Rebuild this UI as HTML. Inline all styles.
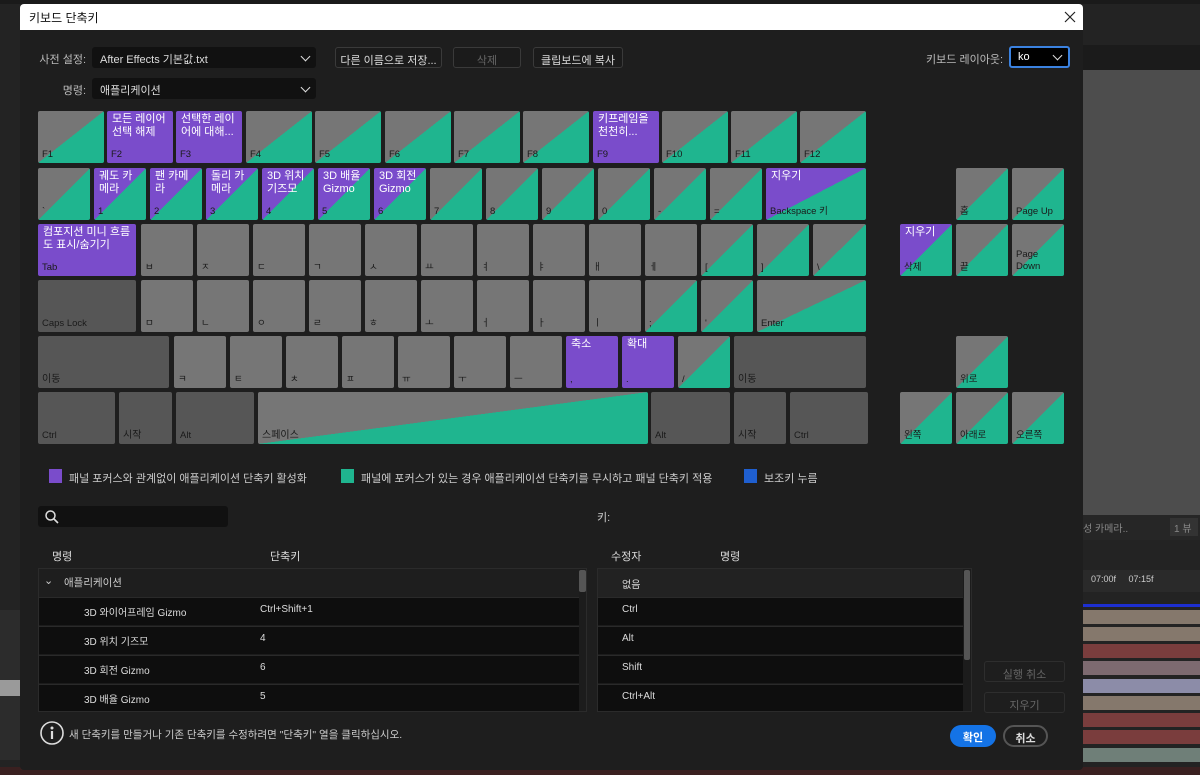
<!DOCTYPE html>
<html><head><meta charset="utf-8">
<style>
*{box-sizing:border-box;margin:0;padding:0}
body{width:1200px;height:775px;overflow:hidden;background:#232323;position:relative;font-family:"Liberation Sans","Noto Sans CJK KR",sans-serif;color:#cfcfcf;font-size:11px}
.a{position:absolute}
.dlg{left:20px;top:4px;width:1063px;height:766px;background:#1e1e1e;border-radius:4px;overflow:hidden}
.title{left:0;top:0;width:1063px;height:26px;background:#fff;color:#111;font-size:12px;padding:5px 0 0 9px}
.k{position:absolute;border-radius:2px;font-size:9.5px;color:#1a1a1a;overflow:hidden}
.k .l{position:absolute;left:4px;bottom:3px;white-space:nowrap}
.k .t{position:absolute;left:5px;top:2px;color:#fff;font-size:11px;line-height:13px}
.gr{background:#767676}
.d{background:#565656}
.g{background:linear-gradient(to bottom right,#767676 50%,#1fb58f 50%)}
.p{background:#7a4ccb}
.pg{background:linear-gradient(to bottom right,#7a4ccb 50%,#1fb58f 50%)}
.d .l{color:#1a1a1a}
.dd{background:#111;border-radius:3px;height:21px;color:#ddd;padding:4px 0 0 8px;font-size:11px}
.chev{position:absolute;right:7px;top:6px;width:7px;height:7px;border-right:1.6px solid #ddd;border-bottom:1.6px solid #ddd;transform:rotate(45deg)}
.btn{background:#1b1b1b;border:1px solid #3a3a3a;border-radius:3px;height:21px;text-align:center;padding-top:4px;font-size:11px;color:#ddd}
.row{position:absolute;left:0;width:540px;height:28px;background:#0e0e0e;border-top:1px solid #2a2a2a;font-size:10px;color:#ddd}
</style></head><body>
<div class="a" style="left:0;top:0;width:1200px;height:4px;background:#1a1a1a"></div>
<div class="a" style="left:1083px;top:45px;width:117px;height:25px;background:#1b1b1b"></div>
<div class="a" style="left:1083px;top:70px;width:117px;height:445px;background:#4d4d4d"></div>
<div class="a" style="left:1083px;top:515px;width:117px;height:25px;background:#262626"></div>
<div class="a" style="left:1170px;top:518px;width:28px;height:18px;background:#333;color:#888;font-size:10px;padding:2px 4px">1 뷰</div>
<div class="a" style="left:1083px;top:520px;width:75px;color:#888;font-size:10px">성 카메라..</div>
<div class="a" style="left:1083px;top:570px;width:117px;height:22px;background:#2a2a2a;color:#ccc;font-size:9px;padding:4px 8px">07:00f &nbsp; &nbsp; 07:15f</div>
<div class="a" style="left:1083px;top:604px;width:117px;height:3px;background:#1d2fd0"></div>
<div class="a" style="left:1083px;top:610px;width:117px;height:14px;background:#85786c"></div>
<div class="a" style="left:1083px;top:627px;width:117px;height:14px;background:#85786c"></div>
<div class="a" style="left:1083px;top:644px;width:117px;height:14px;background:#7a3d3d"></div>
<div class="a" style="left:1083px;top:661px;width:117px;height:14px;background:#7d6a70"></div>
<div class="a" style="left:1083px;top:679px;width:117px;height:14px;background:#8c8ca8"></div>
<div class="a" style="left:1083px;top:696px;width:117px;height:14px;background:#85786c"></div>
<div class="a" style="left:1083px;top:713px;width:117px;height:14px;background:#7a3d3d"></div>
<div class="a" style="left:1083px;top:730px;width:117px;height:14px;background:#7a3d3d"></div>
<div class="a" style="left:1083px;top:748px;width:117px;height:14px;background:#6f7f78"></div>
<div class="a" style="left:0;top:767px;width:1200px;height:8px;background:#3a2020"></div>
<div class="a" style="left:0;top:610px;width:20px;height:150px;background:#2c2c2c"></div>
<div class="a" style="left:0;top:680px;width:20px;height:16px;background:#9a9a9a"></div>

<div class="a dlg">
<div class="a title">키보드 단축키</div>
<svg class="a" style="left:1044px;top:7px" width="12" height="12"><path d="M1 1L11 11M11 1L1 11" stroke="#222" stroke-width="1.2"/></svg>
</div>

<div class="a" style="left:38px;top:51px;width:48px;text-align:right;color:#bbb">사전 설정:</div>
<div class="a dd" style="left:92px;top:47px;width:224px">After Effects 기본값.txt<span class="chev"></span></div>
<div class="a" style="left:38px;top:82px;width:48px;text-align:right;color:#bbb">명령:</div>
<div class="a dd" style="left:92px;top:78px;width:224px">애플리케이션<span class="chev"></span></div>
<div class="a btn" style="left:335px;top:47px;width:107px">다른 이름으로 저장...</div>
<div class="a btn" style="left:453px;top:47px;width:68px;color:#666">삭제</div>
<div class="a btn" style="left:533px;top:47px;width:90px">클립보드에 복사</div>
<div class="a" style="left:900px;top:51px;width:103px;text-align:right;color:#bbb">키보드 레이아웃:</div>
<div class="a dd" style="left:1009px;top:46px;width:61px;height:22px;background:#000;border:2px solid #3b82e0;padding:3px 0 0 7px;color:#fff">ko<span class="chev" style="top:4px"></span></div>

<div class="k g" style="left:38px;top:111px;width:66px;height:52px"><span class="l">F1</span></div>
<div class="k p" style="left:107px;top:111px;width:66px;height:52px"><span class="t">모든 레이어<br>선택 해제</span><span class="l">F2</span></div>
<div class="k p" style="left:176px;top:111px;width:66px;height:52px"><span class="t">선택한 레이<br>어에 대해...</span><span class="l">F3</span></div>
<div class="k g" style="left:246px;top:111px;width:66px;height:52px"><span class="l">F4</span></div>
<div class="k g" style="left:315px;top:111px;width:66px;height:52px"><span class="l">F5</span></div>
<div class="k g" style="left:385px;top:111px;width:66px;height:52px"><span class="l">F6</span></div>
<div class="k g" style="left:454px;top:111px;width:66px;height:52px"><span class="l">F7</span></div>
<div class="k g" style="left:523px;top:111px;width:66px;height:52px"><span class="l">F8</span></div>
<div class="k p" style="left:593px;top:111px;width:66px;height:52px"><span class="t">키프레임을<br>천천히...</span><span class="l">F9</span></div>
<div class="k g" style="left:662px;top:111px;width:66px;height:52px"><span class="l">F10</span></div>
<div class="k g" style="left:731px;top:111px;width:66px;height:52px"><span class="l">F11</span></div>
<div class="k g" style="left:800px;top:111px;width:66px;height:52px"><span class="l">F12</span></div>

<div class="k g" style="left:38px;top:168px;width:52px;height:52px"><span class="l">`</span></div>
<div class="k pg" style="left:94px;top:168px;width:52px;height:52px"><span class="t">궤도 카<br>메라</span><span class="l">1</span></div>
<div class="k pg" style="left:150px;top:168px;width:52px;height:52px"><span class="t">팬 카메<br>라</span><span class="l">2</span></div>
<div class="k pg" style="left:206px;top:168px;width:52px;height:52px"><span class="t">돌리 카<br>메라</span><span class="l">3</span></div>
<div class="k pg" style="left:262px;top:168px;width:52px;height:52px"><span class="t">3D 위치<br>기즈모</span><span class="l">4</span></div>
<div class="k pg" style="left:318px;top:168px;width:52px;height:52px"><span class="t">3D 배율<br>Gizmo</span><span class="l">5</span></div>
<div class="k pg" style="left:374px;top:168px;width:52px;height:52px"><span class="t">3D 회전<br>Gizmo</span><span class="l">6</span></div>
<div class="k g" style="left:430px;top:168px;width:52px;height:52px"><span class="l">7</span></div>
<div class="k g" style="left:486px;top:168px;width:52px;height:52px"><span class="l">8</span></div>
<div class="k g" style="left:542px;top:168px;width:52px;height:52px"><span class="l">9</span></div>
<div class="k g" style="left:598px;top:168px;width:52px;height:52px"><span class="l">0</span></div>
<div class="k g" style="left:654px;top:168px;width:52px;height:52px"><span class="l">-</span></div>
<div class="k g" style="left:710px;top:168px;width:52px;height:52px"><span class="l">=</span></div>
<div class="k pg" style="left:766px;top:168px;width:100px;height:52px"><span class="t">지우기</span><span class="l">Backspace 키</span></div>
<div class="k g" style="left:956px;top:168px;width:52px;height:52px"><span class="l">홈</span></div>
<div class="k g" style="left:1012px;top:168px;width:52px;height:52px"><span class="l">Page Up</span></div>

<div class="k p" style="left:38px;top:224px;width:98px;height:52px"><span class="t">컴포지션 미니 흐름<br>도 표시/숨기기</span><span class="l">Tab</span></div>
<div class="k gr" style="left:141px;top:224px;width:52px;height:52px"><span class="l">ㅂ</span></div>
<div class="k gr" style="left:197px;top:224px;width:52px;height:52px"><span class="l">ㅈ</span></div>
<div class="k gr" style="left:253px;top:224px;width:52px;height:52px"><span class="l">ㄷ</span></div>
<div class="k gr" style="left:309px;top:224px;width:52px;height:52px"><span class="l">ㄱ</span></div>
<div class="k gr" style="left:365px;top:224px;width:52px;height:52px"><span class="l">ㅅ</span></div>
<div class="k gr" style="left:421px;top:224px;width:52px;height:52px"><span class="l">ㅛ</span></div>
<div class="k gr" style="left:477px;top:224px;width:52px;height:52px"><span class="l">ㅕ</span></div>
<div class="k gr" style="left:533px;top:224px;width:52px;height:52px"><span class="l">ㅑ</span></div>
<div class="k gr" style="left:589px;top:224px;width:52px;height:52px"><span class="l">ㅐ</span></div>
<div class="k gr" style="left:645px;top:224px;width:52px;height:52px"><span class="l">ㅔ</span></div>
<div class="k g" style="left:701px;top:224px;width:52px;height:52px"><span class="l">[</span></div>
<div class="k g" style="left:757px;top:224px;width:52px;height:52px"><span class="l">]</span></div>
<div class="k g" style="left:813px;top:224px;width:53px;height:52px"><span class="l">\</span></div>
<div class="k pg" style="left:900px;top:224px;width:52px;height:52px"><span class="t">지우기</span><span class="l">삭제</span></div>
<div class="k g" style="left:956px;top:224px;width:52px;height:52px"><span class="l">끝</span></div>
<div class="k g" style="left:1012px;top:224px;width:52px;height:52px"><span class="l" style="line-height:12px">Page<br>Down</span></div>

<div class="k d" style="left:38px;top:280px;width:98px;height:52px"><span class="l">Caps Lock</span></div>
<div class="k gr" style="left:141px;top:280px;width:52px;height:52px"><span class="l">ㅁ</span></div>
<div class="k gr" style="left:197px;top:280px;width:52px;height:52px"><span class="l">ㄴ</span></div>
<div class="k gr" style="left:253px;top:280px;width:52px;height:52px"><span class="l">ㅇ</span></div>
<div class="k gr" style="left:309px;top:280px;width:52px;height:52px"><span class="l">ㄹ</span></div>
<div class="k gr" style="left:365px;top:280px;width:52px;height:52px"><span class="l">ㅎ</span></div>
<div class="k gr" style="left:421px;top:280px;width:52px;height:52px"><span class="l">ㅗ</span></div>
<div class="k gr" style="left:477px;top:280px;width:52px;height:52px"><span class="l">ㅓ</span></div>
<div class="k gr" style="left:533px;top:280px;width:52px;height:52px"><span class="l">ㅏ</span></div>
<div class="k gr" style="left:589px;top:280px;width:52px;height:52px"><span class="l">ㅣ</span></div>
<div class="k g" style="left:645px;top:280px;width:52px;height:52px"><span class="l">;</span></div>
<div class="k g" style="left:701px;top:280px;width:52px;height:52px"><span class="l">'</span></div>
<div class="k g" style="left:757px;top:280px;width:109px;height:52px"><span class="l">Enter</span></div>

<div class="k d" style="left:38px;top:336px;width:131px;height:52px"><span class="l" style="font-size:10px">이동</span></div>
<div class="k gr" style="left:174px;top:336px;width:52px;height:52px"><span class="l">ㅋ</span></div>
<div class="k gr" style="left:230px;top:336px;width:52px;height:52px"><span class="l">ㅌ</span></div>
<div class="k gr" style="left:286px;top:336px;width:52px;height:52px"><span class="l">ㅊ</span></div>
<div class="k gr" style="left:342px;top:336px;width:52px;height:52px"><span class="l">ㅍ</span></div>
<div class="k gr" style="left:398px;top:336px;width:52px;height:52px"><span class="l">ㅠ</span></div>
<div class="k gr" style="left:454px;top:336px;width:52px;height:52px"><span class="l">ㅜ</span></div>
<div class="k gr" style="left:510px;top:336px;width:52px;height:52px"><span class="l">ㅡ</span></div>
<div class="k p" style="left:566px;top:336px;width:52px;height:52px"><span class="t">축소</span><span class="l">,</span></div>
<div class="k p" style="left:622px;top:336px;width:52px;height:52px"><span class="t">확대</span><span class="l">.</span></div>
<div class="k g" style="left:678px;top:336px;width:52px;height:52px"><span class="l">/</span></div>
<div class="k d" style="left:734px;top:336px;width:132px;height:52px"><span class="l" style="font-size:10px">이동</span></div>
<div class="k g" style="left:956px;top:336px;width:52px;height:52px"><span class="l">위로</span></div>

<div class="k d" style="left:38px;top:392px;width:77px;height:52px"><span class="l">Ctrl</span></div>
<div class="k d" style="left:119px;top:392px;width:53px;height:52px"><span class="l" style="font-size:10px">시작</span></div>
<div class="k d" style="left:176px;top:392px;width:78px;height:52px"><span class="l">Alt</span></div>
<div class="k g" style="left:258px;top:392px;width:390px;height:52px"><span class="l" style="font-size:10px">스페이스</span></div>
<div class="k d" style="left:651px;top:392px;width:79px;height:52px"><span class="l">Alt</span></div>
<div class="k d" style="left:734px;top:392px;width:52px;height:52px"><span class="l" style="font-size:10px">시작</span></div>
<div class="k d" style="left:790px;top:392px;width:78px;height:52px"><span class="l">Ctrl</span></div>
<div class="k g" style="left:900px;top:392px;width:52px;height:52px"><span class="l">왼쪽</span></div>
<div class="k g" style="left:956px;top:392px;width:52px;height:52px"><span class="l">아래로</span></div>
<div class="k g" style="left:1012px;top:392px;width:52px;height:52px"><span class="l">오른쪽</span></div>

<div class="a" style="left:49px;top:469px;width:13px;height:14px;background:#7a4ccb"></div>
<div class="a" style="left:69px;top:470px;color:#ccc">패널 포커스와 관계없이 애플리케이션 단축키 활성화</div>
<div class="a" style="left:341px;top:469px;width:13px;height:14px;background:#1fb58f"></div>
<div class="a" style="left:361px;top:470px;color:#ccc">패널에 포커스가 있는 경우 애플리케이션 단축키를 무시하고 패널 단축키 적용</div>
<div class="a" style="left:744px;top:469px;width:13px;height:14px;background:#1f5fd0"></div>
<div class="a" style="left:764px;top:470px;color:#ccc">보조키 누름</div>

<div class="a" style="left:38px;top:506px;width:190px;height:21px;background:#111;border-radius:3px"></div>
<svg class="a" style="left:44px;top:509px" width="16" height="16"><circle cx="6.5" cy="6.5" r="4.5" fill="none" stroke="#ddd" stroke-width="1.5"/><path d="M10 10 L14 14" stroke="#ddd" stroke-width="1.6"/></svg>
<div class="a" style="left:597px;top:509px;color:#ccc">키:</div>

<div class="a" style="left:52px;top:548px;color:#ddd">명령</div>
<div class="a" style="left:270px;top:548px;color:#ddd">단축키</div>
<div class="a" style="left:611px;top:548px;color:#ddd">수정자</div>
<div class="a" style="left:720px;top:548px;color:#ddd">명령</div>

<div class="a" style="left:38px;top:568px;width:549px;height:144px;background:#1c1c1c;border:1px solid #2b2b2b;overflow:hidden">
 <div class="row" style="top:0;background:#1e1e1e;border:none;color:#ccc"><span class="a" style="left:5px;top:5px;font-size:11px">⌄</span><span class="a" style="left:25px;top:6px;font-size:10.5px">애플리케이션</span></div>
 <div class="row" style="top:28px"><span class="a" style="left:45px;top:6px">3D 와이어프레임 Gizmo</span><span class="a" style="left:221px;top:6px">Ctrl+Shift+1</span></div>
 <div class="row" style="top:57px"><span class="a" style="left:45px;top:6px">3D 위치 기즈모</span><span class="a" style="left:221px;top:6px">4</span></div>
 <div class="row" style="top:86px"><span class="a" style="left:45px;top:6px">3D 회전 Gizmo</span><span class="a" style="left:221px;top:6px">6</span></div>
 <div class="row" style="top:115px"><span class="a" style="left:45px;top:6px">3D 배율 Gizmo</span><span class="a" style="left:221px;top:6px">5</span></div>
 <div class="a" style="left:540px;top:1px;width:7px;height:22px;background:#555;border-radius:2px"></div>
</div>
<div class="a" style="left:597px;top:568px;width:375px;height:144px;background:#1c1c1c;border:1px solid #2b2b2b;overflow:hidden">
 <div class="row" style="top:0;width:365px;background:#222;border:none"><span class="a" style="left:24px;top:7px">없음</span></div>
 <div class="row" style="top:28px;width:365px"><span class="a" style="left:24px;top:6px">Ctrl</span></div>
 <div class="row" style="top:57px;width:365px"><span class="a" style="left:24px;top:6px">Alt</span></div>
 <div class="row" style="top:86px;width:365px"><span class="a" style="left:24px;top:6px">Shift</span></div>
 <div class="row" style="top:115px;width:365px"><span class="a" style="left:24px;top:6px">Ctrl+Alt</span></div>
 <div class="a" style="left:366px;top:1px;width:6px;height:90px;background:#555;border-radius:2px"></div>
</div>
<div class="a btn" style="left:984px;top:661px;width:81px;color:#666;background:#1e1e1e;border-color:#2e2e2e">실행 취소</div>
<div class="a btn" style="left:984px;top:692px;width:81px;color:#666;background:#1e1e1e;border-color:#2e2e2e">지우기</div>

<svg class="a" style="left:39px;top:720px" width="26" height="26"><circle cx="13" cy="13" r="11" fill="none" stroke="#ddd" stroke-width="1.6"/><circle cx="13" cy="8" r="1.5" fill="#ddd"/><path d="M13 11v8" stroke="#ddd" stroke-width="2.2"/></svg>
<div class="a" style="left:69px;top:727px;color:#ccc;font-size:10.5px">새 단축키를 만들거나 기존 단축키를 수정하려면 "단축키" 열을 클릭하십시오.</div>

<div class="a" style="left:950px;top:725px;width:46px;height:22px;background:#1473e6;border-radius:11px;color:#fff;text-align:center;padding-top:4px;font-weight:bold;font-size:11px">확인</div>
<div class="a" style="left:1003px;top:725px;width:45px;height:22px;border:2px solid #555;border-radius:11px;color:#ddd;text-align:center;padding-top:3px;font-weight:bold;font-size:11px">취소</div>
</body></html>
